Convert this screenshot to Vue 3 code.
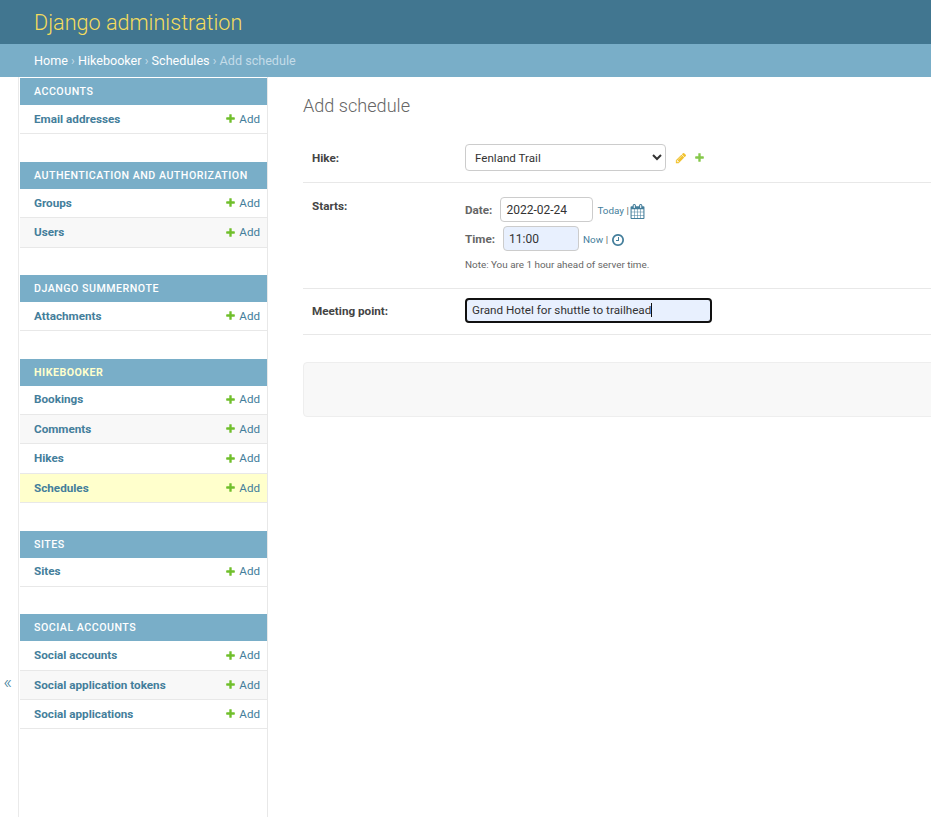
<script setup>
const plus = 'M1600 796v192q0 40-28 68t-68 28h-416v416q0 40-28 68t-68 28h-192q-40 0-68-28t-28-68v-416h-416q-40 0-68-28t-28-68v-192q0-40 28-68t68-28h416v-416q0-40 28-68t68-28h192q40 0 68 28t28 68v416h416q40 0 68 28t28 68z'
const pencil = 'M491 1536l91-91-235-235-91 91v107h128v128h107zm523-928q0-22-22-22-10 0-17 7l-542 542q-7 7-7 17 0 22 22 22 10 0 17-7l542-542q7-7 7-17zm-54-192l416 416-832 832h-416v-416zm683 96q0 53-37 90l-166 166-416-416 166-165q36-38 90-38 53 0 91 38l235 234q37 39 37 91z'
const calendar = 'M192 1664h288v-288h-288v288zm352 0h320v-288h-320v288zm-352-352h288v-320h-288v320zm352 0h320v-320h-320v320zm-352-384h288v-288h-288v288zm736 736h320v-288h-320v288zm-384-736h320v-288h-320v288zm768 736h288v-288h-288v288zm-384-352h320v-320h-320v320zm-352-864v-288q0-13-9.5-22.5t-22.5-9.5h-64q-13 0-22.5 9.5t-9.5 22.5v288q0 13 9.5 22.5t22.5 9.5h64q13 0 22.5-9.5t9.5-22.5zm736 864h288v-320h-288v320zm-384-384h320v-288h-320v288zm384 0h288v-288h-288v288zm32-480v-288q0-13-9.5-22.5t-22.5-9.5h-64q-13 0-22.5 9.5t-9.5 22.5v288q0 13 9.5 22.5t22.5 9.5h64q13 0 22.5-9.5t9.5-22.5zm384-64v1280q0 52-38 90t-90 38h-1408q-52 0-90-38t-38-90v-1280q0-52 38-90t90-38h128v-96q0-66 47-113t113-47h64q66 0 113 47t47 113v96h384v-96q0-66 47-113t113-47h64q66 0 113 47t47 113v96h128q52 0 90 38t38 90z'
const clock = 'M1024 544v448q0 14-9 23t-23 9h-320q-14 0-23-9t-9-23v-64q0-14 9-23t23-9h224v-352q0-14 9-23t23-9h64q14 0 23 9t9 23zm416 352q0-148-73-273t-198-198-273-73-273 73-198 198-73 273 73 273 198 198 273 73 273-73 198-198 73-273zm224 0q0 209-103 385.5t-279.5 279.5-385.5 103-385.5-103-279.5-279.5-103-385.5 103-385.5 279.5-279.5 385.5-103 385.5 103 279.5 279.5 103 385.5z'

const modules = [
  { name: 'Accounts', models: ['Email addresses'] },
  { name: 'Authentication and Authorization', models: ['Groups', 'Users'] },
  { name: 'Django Summernote', models: ['Attachments'] },
  { name: 'Hikebooker', current: true, models: ['Bookings', 'Comments', 'Hikes', 'Schedules'] },
  { name: 'Sites', models: ['Sites'] },
  { name: 'Social Accounts', models: ['Social accounts', 'Social application tokens', 'Social applications'] },
]
</script>

<template>
  <div class="page">
    <header class="header">
      <a class="brand">Django administration</a>
    </header>
    <nav class="crumbs">
      <a>Home</a><span class="sep"> › </span><a>Hikebooker</a><span class="sep"> › </span><a>Schedules</a><span class="sep"> › Add schedule</span>
    </nav>
    <div class="main">
      <button class="toggle">«</button>
      <aside class="sidebar">
        <section v-for="m in modules" :key="m.name" class="module">
          <h2 class="caption" :class="{ current: m.current }">{{ m.name }}</h2>
          <div
            v-for="(model, i) in m.models"
            :key="model"
            class="row"
            :class="{ alt: i % 2 === 1, selected: model === 'Schedules' }"
          >
            <a class="model">{{ model }}</a>
            <a class="add">
              <svg width="11" height="11" viewBox="0 0 1792 1792"><path fill="#70bf2b" :d="plus" /></svg>
              Add
            </a>
          </div>
        </section>
      </aside>
      <main class="content">
        <h1 class="title">Add schedule</h1>
        <form class="form" @submit.prevent>
          <div class="form-row hike">
            <label class="label">Hike:</label>
            <select class="select">
              <option>Fenland Trail</option>
            </select>
            <svg class="pencil" viewBox="0 0 1792 1792"><path fill="#efb80b" :d="pencil" /></svg>
            <svg class="plus" viewBox="0 0 1792 1792"><path fill="#70bf2b" :d="plus" /></svg>
          </div>
          <div class="form-row starts">
            <label class="label">Starts:</label>
            <div class="datetime">
              <div class="dt-line">
                <span class="dt-label">Date:</span>
                <input class="input date" value="2022-02-24" />
                <span class="shortcut"><a>Today</a> | </span>
                <svg class="cal" width="15" height="15" viewBox="0 0 1792 1792"><path fill="#447e9b" :d="calendar" /></svg>
              </div>
              <div class="dt-line">
                <span class="dt-label">Time:</span>
                <input class="input time" value="11:00" />
                <span class="shortcut"><a>Now</a> | </span>
                <svg class="clk" width="14" height="14" viewBox="0 0 1792 1792"><path fill="#447e9b" :d="clock" /></svg>
              </div>
              <p class="note">Note: You are 1 hour ahead of server time.</p>
            </div>
          </div>
          <div class="form-row meeting">
            <label class="label">Meeting point:</label>
            <div class="focused">Grand Hotel for shuttle to trailhead<span class="caret"></span></div>
          </div>
          <div class="submit-row"></div>
        </form>
      </main>
    </div>
  </div>
</template>

<style>
html, body { margin: 0; height: 817px; overflow: hidden; background: #fff; }
</style>

<style scoped>
.page {
  width: 931px;
  height: 817px;
  overflow: hidden;
  font-family: Roboto, "Liberation Sans", sans-serif;
  font-size: 14px;
  color: #333;
  display: flex;
  flex-direction: column;
}
.header {
  box-sizing: border-box;
  height: 44px;
  flex: none;
  background: #417690;
  padding: 1px 0 0 34px;
  display: flex;
  align-items: center;
}
.brand {
  font-size: 21.6px;
  font-weight: 300;
  color: #f5dd5d;
  line-height: 1;
}
.crumbs {
  height: 33px;
  flex: none;
  background: #79aec8;
  padding-left: 34px;
  line-height: 33px;
  font-size: 12.6px;
  color: #c4dce8;
  white-space: pre;
}
.crumbs a { color: #fff; }
.main { flex: 1; display: flex; min-height: 0; }
.toggle {
  flex: none;
  width: 15px;
  height: 270px;
  border: 0;
  border-right: 1px solid #eaeaea;
  box-sizing: content-box;
  padding: 470px 3px 0 0;
  background: #fff;
  color: #447e9b;
  font-family: inherit;
  font-size: 19px;
  font-weight: 300;
  display: block;
  text-align: center;
  line-height: 42px;
}
.sidebar {
  flex: none;
  width: 247px;
  margin-left: 1px;
  padding-top: 1px;
  border-right: 1px solid #e8e8e8;
}
.module { margin-bottom: 27.35px; }
.caption {
  margin: 0;
  height: 27px;
  padding-left: 14px;
  background: #79aec8;
  color: #fff;
  font-size: 10.65px;
  font-weight: 500;
  line-height: 27px;
  letter-spacing: 0.5px;
  text-transform: uppercase;
}
.caption.current { color: #ffc; font-weight: 700; }
.row {
  box-sizing: border-box;
  height: 29.4px;
  padding: 0 7px 0.6px 14px;
  border-bottom: 1px solid #e8e8e8;
  display: flex;
  align-items: center;
  justify-content: space-between;
  font-size: 11.7px;
  color: #447e9b;
}
.row.alt { background: #f8f8f8; }
.row.selected { background: #ffc; }
.model { font-weight: 700; }
.add { display: flex; align-items: center; gap: 3px; font-size: 11.6px; }
.content { flex: 1; min-width: 0; padding-left: 35px; }
.title {
  margin: 18px 0 0;
  font-size: 18.1px;
  line-height: 22px;
  font-weight: 300;
  color: #666;
}
.form { width: 700px; }
.form-row {
  box-sizing: border-box;
  display: flex;
  align-items: flex-start;
  border-bottom: 1px solid #e8e8e8;
  padding-left: 9px;
}
.label {
  flex: none;
  width: 153px;
  font-size: 11.7px;
  font-weight: 700;
  color: #444;
}
.hike { height: 60px; margin-top: 6px; align-items: center; padding-top: 21px; padding-bottom: 11px; }
.select {
  box-sizing: border-box;
  width: 201px;
  height: 27px;
  padding: 0 4px 0 5px;
  background: #fff;
  border: 1px solid #ccc;
  border-radius: 4px;
  font-family: inherit;
  font-size: 11.6px;
  color: #333;
}
.pencil { margin-left: 9px; width: 12px; height: 12px; opacity: 0.85; }
.plus { margin-left: 7px; width: 11px; height: 11px; opacity: 0.85; }
.starts { height: 106px; padding-top: 16px; }
.datetime { display: flex; flex-direction: column; margin-top: -4px; }
.dt-line { display: flex; align-items: center; height: 29px; color: #666; }
.dt-label { font-size: 11.7px; font-weight: 700; margin-right: 8px; }
.input {
  box-sizing: border-box;
  height: 25px;
  padding: 0 5px;
  border: 1px solid #ccc;
  border-radius: 4px;
  font-family: inherit;
  font-size: 12px;
  color: #333;
  background: #fff;
}
.date { width: 93px; }
.time { width: 76px; background: #e8f0fe; }
.shortcut { font-size: 9.9px; color: #666; margin: 2px 0 0 4px; white-space: pre; }
.shortcut a { color: #447e9b; }
.cal { margin: 3px 0 0 -1px; }
.clk { margin-top: 2px; }
.note { margin: 5px 0 0; font-size: 9.9px; line-height: 13px; color: #666; }
.meeting { height: 46px; align-items: center; padding-bottom: 2px; }
.focused {
  box-sizing: border-box;
  width: 247px;
  height: 25px;
  padding-left: 5px;
  background: #e8f0fe;
  border: 2px solid #111;
  border-radius: 4px;
  font-size: 11.7px;
  line-height: 20px;
  color: #333;
  white-space: nowrap;
}
.caret { display: inline-block; width: 1px; height: 14px; background: #111; vertical-align: -3px; }
.submit-row {
  box-sizing: border-box;
  height: 55px;
  margin-top: 27px;
  background: #f8f8f8;
  border: 1px solid #eee;
  border-radius: 4px;
}
</style>
